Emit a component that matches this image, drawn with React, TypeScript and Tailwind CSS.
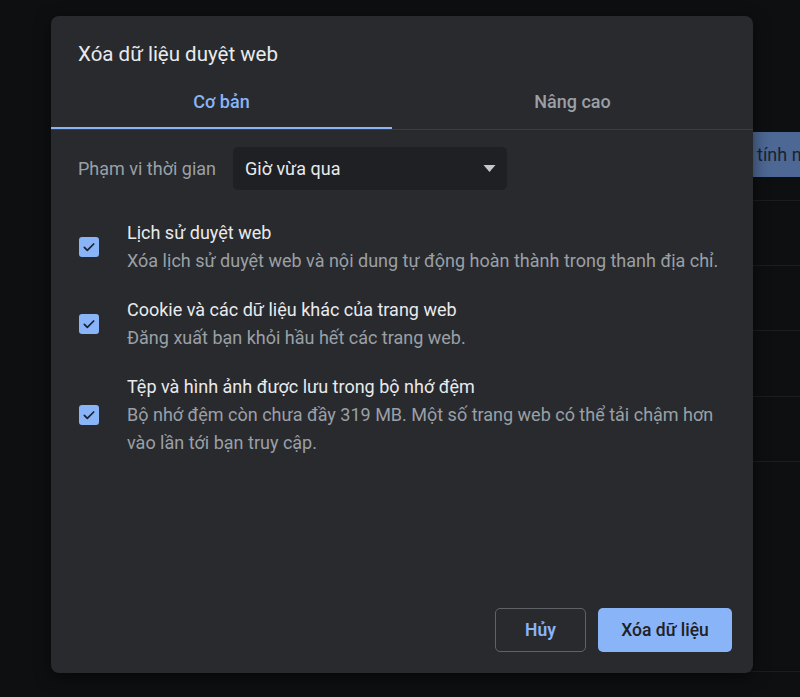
import { useState } from "react";

function Check({ checked, onClick }: { checked: boolean; onClick: () => void }) {
    return (
        <button
            type="button"
            onClick={onClick}
            className={`flex h-[20px] w-[20px] items-center justify-center rounded-[3px] ${
                checked ? "bg-[#8ab4f8]" : "border-2 border-[#9aa0a6]"
            }`}
        >
            {checked && (
                <svg viewBox="0 0 24 24" className="h-[16px] w-[16px]" fill="none">
                    <path
                        d="M5 12.5l4.5 4.5L19 7.5"
                        stroke="#1b2435"
                        strokeWidth="2.6"
                        strokeLinecap="round"
                        strokeLinejoin="round"
                    />
                </svg>
            )}
        </button>
    );
}

const items = [
    {
        title: "Lịch sử duyệt web",
        desc: ["Xóa lịch sử duyệt web và nội dung tự động hoàn thành trong thanh địa chỉ."],
    },
    {
        title: "Cookie và các dữ liệu khác của trang web",
        desc: ["Đăng xuất bạn khỏi hầu hết các trang web."],
    },
    {
        title: "Tệp và hình ảnh được lưu trong bộ nhớ đệm",
        desc: [
            "Bộ nhớ đệm còn chưa đầy 319 MB. Một số trang web có thể tải chậm hơn",
            "vào lần tới bạn truy cập.",
        ],
    },
];

export default function App() {
    const [tab, setTab] = useState(0);
    const [checks, setChecks] = useState([true, true, true]);

    return (
        <div
            className="relative h-[697px] w-[800px] overflow-hidden bg-[#0e0f11]"
            style={{ fontFamily: "Roboto, 'Noto Sans', sans-serif" }}
        >
            {/* page behind the dialog */}
            <div className="ml-[66px] flex h-full flex-col">
                <div className="h-[132px]" />
                <div className="flex h-[45px] items-center justify-end">
                    <div className="flex h-full w-[180px] items-center whitespace-nowrap bg-[#4d6894] pl-[137px] text-[18px] text-[#1a2232]">
                        tính năng
                    </div>
                </div>
                <div className="flex flex-col">
                    <div className="h-[24px] border-b border-[#1c1d20]" />
                    <div className="h-[65px] border-b border-[#1c1d20]" />
                    <div className="h-[65px] border-b border-[#1c1d20]" />
                    <div className="h-[66px] border-b border-[#1c1d20]" />
                    <div className="h-[65px] border-b border-[#1c1d20]" />
                    <div className="h-[210px] border-b border-[#1c1d20]" />
                    <div className="flex-1 bg-[#111214]" />
                </div>
            </div>

            {/* dialog */}
            <div className="absolute left-[51px] top-[16px] flex h-[657px] w-[702px] flex-col rounded-[8px] bg-[#292a2e] shadow-[0_4px_16px_rgba(0,0,0,0.5)]">
                <h1 className="px-[27px] pt-[24px] text-[20.5px] leading-[28px] text-[#e8eaed]">
                    Xóa dữ liệu duyệt web
                </h1>

                <div className="mt-[8px] flex border-b border-[#3c3d41]">
                    {["Cơ bản", "Nâng cao"].map((t, i) => (
                        <button
                            key={t}
                            type="button"
                            onClick={() => setTab(i)}
                            className={`relative flex h-[53px] items-center justify-center pb-[2px] text-[18px] font-medium ${
                                i === 0 ? "w-[341px]" : "flex-1"
                            } ${tab === i ? "text-[#8ab4f8]" : "text-[#9aa0a6]"}`}
                        >
                            {t}
                            {tab === i && (
                                <span className="absolute bottom-0 left-0 right-0 h-[2px] bg-[#8ab4f8]" />
                            )}
                        </button>
                    ))}
                </div>

                <div className="mt-[17px] flex items-center px-[27px]">
                    <span className="w-[155px] text-[18px] text-[#9aa0a6]">Phạm vi thời gian</span>
                    <div className="flex h-[43px] w-[274px] items-center justify-between rounded-[5px] bg-[#1f2023] pl-[12px] pr-[11px]">
                        <span className="text-[18px] text-[#e8eaed]">Giờ vừa qua</span>
                        <svg viewBox="0 0 12 7" className="h-[7px] w-[13px]">
                            <path d="M0 0h12L6 7z" fill="#c4c7cc" />
                        </svg>
                    </div>
                </div>

                <div className="mt-[29px] flex flex-col gap-[21px] pl-[28px] pr-[20px]">
                    {items.map((it, i) => (
                        <div key={it.title} className="flex items-center">
                            <div className="w-[48px]">
                                <Check
                                    checked={checks[i]}
                                    onClick={() =>
                                        setChecks((c) => c.map((v, j) => (j === i ? !v : v)))
                                    }
                                />
                            </div>
                            <div className="flex flex-col text-[18px] leading-[28px]">
                                <span className="text-[#e8eaed]">{it.title}</span>
                                {it.desc.map((d) => (
                                    <span key={d} className="text-[#9aa0a6]">
                                        {d}
                                    </span>
                                ))}
                            </div>
                        </div>
                    ))}
                </div>

                <div className="mt-auto flex justify-end gap-[12px] px-[21px] pb-[21px]">
                    <button
                        type="button"
                        className="h-[44px] w-[91px] rounded-[5px] border border-[#5f6368] text-[17.5px] font-semibold text-[#8ab4f8]"
                    >
                        Hủy
                    </button>
                    <button
                        type="button"
                        className="h-[44px] w-[134px] rounded-[5px] bg-[#8ab4f8] text-[17.5px] font-medium text-[#202124]"
                    >
                        Xóa dữ liệu
                    </button>
                </div>
            </div>
        </div>
    );
}
